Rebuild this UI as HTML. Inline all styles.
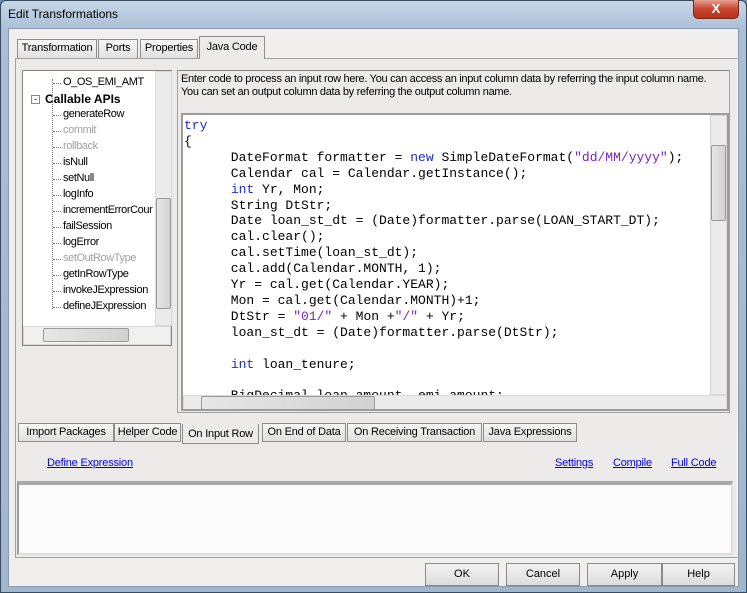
<!DOCTYPE html>
<html><head><style>
*{margin:0;padding:0;box-sizing:border-box}
body{width:747px;height:593px;overflow:hidden;background:#6f8cab;font-family:"Liberation Sans",sans-serif;font-size:11px;color:#000;position:relative}
.a{position:absolute}
.win{left:0;top:0;width:747px;height:593px;background:linear-gradient(#c6d6e6,#a9bfd6 30px,#9fb6cf);border:1px solid #3a4a5e;border-radius:6px 6px 0 0}
.client{left:8px;top:28px;width:731px;height:559px;background:#f0efed;border:1px solid #8a99ab}
.tab{position:absolute;top:39px;height:19px;background:linear-gradient(#f6f6f6,#e2e2e2);border:1px solid #8d8d8d;border-bottom:none;font-size:11px;line-height:17px;text-align:center;letter-spacing:-0.2px}
.panel{left:15px;top:58px;width:723px;height:500px;border:1px solid #a0a0a0;border-right-color:#fff;border-bottom-color:#a0a0a0;background:#ecebe9}
.tree{left:22px;top:70px;width:150px;height:276px;border:1px solid #828282;background:#fff}
.ti{position:absolute;left:40px;font-size:11px;white-space:nowrap;letter-spacing:-0.4px}
.ti:before{content:"";position:absolute;left:-10px;top:7px;width:8px;border-top:1px dotted #777}
.g{color:#a0a0a0}
.code{left:181px;top:113px;width:548px;height:298px;border:2px solid #9c9c9c;background:#fff;overflow:hidden}
pre{font-family:"Liberation Mono",monospace;font-size:13px;line-height:15.9px;position:absolute;left:1px;top:3px;color:#000}
.k{color:#1e2dc8}.s{color:#7a23b9}
.sb{background:#ebebeb;border:1px solid #d8d8d8}
.thumb{background:linear-gradient(90deg,#e6e6e6,#d2d2d2);border:1px solid #9a9a9a;border-radius:2px}
.bt{position:absolute;top:423px;height:19px;background:linear-gradient(#f6f6f6,#e0e0e0);border:1px solid #8d8d8d;font-size:11px;line-height:17px;text-align:center;letter-spacing:-0.2px}
.lnk{color:#0000e0;text-decoration:underline;font-size:11px;position:absolute;top:457px;letter-spacing:-0.2px}
.btn{position:absolute;top:563px;height:23px;border:1px solid #8a8a8a;background:linear-gradient(#f2f2f2,#dcdcdc);font-size:11px;line-height:21px;text-align:center}
</style></head><body>
<div class="a win"></div>
<div class="a" style="left:8px;top:7px;font-size:12px">Edit Transformations</div>
<div class="a" style="left:693px;top:0;width:46px;height:19px;background:linear-gradient(#e8a090,#c9452e 50%,#b8301a);border:1px solid #6b2a20;border-top:none;border-radius:0 0 5px 5px;color:#fff;font-weight:bold;font-size:13px;text-align:center;line-height:17px">X</div>
<div class="a client"></div>
<div class="a panel"></div>
<div class="tab" style="left:17px;width:80px">Transformation</div>
<div class="tab" style="left:98px;width:40px">Ports</div>
<div class="tab" style="left:140px;width:58px">Properties</div>
<div class="tab" style="left:199px;top:36px;height:23px;width:66px;background:#ecebe9;z-index:3;line-height:20px">Java Code</div>

<div class="a tree">
 <div class="ti" style="left:40px;top:5px">O_OS_EMI_AMT</div>
 <div class="a" style="left:8px;top:24px;width:9px;height:9px;border:1px solid #888;font-size:9px;line-height:6px;text-align:center">-</div>
 <div class="a" style="left:22px;top:21px;font-weight:bold;font-size:12px">Callable APIs</div>
 <div class="ti" style="top:37px">generateRow</div>
 <div class="ti g" style="top:53px">commit</div>
 <div class="ti g" style="top:69px">rollback</div>
 <div class="ti" style="top:85px">isNull</div>
 <div class="ti" style="top:101px">setNull</div>
 <div class="ti" style="top:117px">logInfo</div>
 <div class="ti" style="top:133px">incrementErrorCour</div>
 <div class="ti" style="top:149px">failSession</div>
 <div class="ti" style="top:165px">logError</div>
 <div class="ti g" style="top:181px">setOutRowType</div>
 <div class="ti" style="top:197px">getInRowType</div>
 <div class="ti" style="top:213px">invokeJExpression</div>
 <div class="ti" style="top:229px">defineJExpression</div>
 <div class="a" style="left:29px;top:8px;height:230px;border-left:1px dotted #777"></div>
 <div class="a sb" style="left:132px;top:0;width:17px;height:255px"></div>
 <div class="a thumb" style="left:133px;top:127px;width:15px;height:111px"></div>
 <div class="a sb" style="left:0;top:255px;width:148px;height:19px;background:#f0f0f0"></div>
 <div class="a thumb" style="left:20px;top:257px;width:86px;height:14px"></div>
</div>

<div class="a" style="left:177px;top:70px;width:553px;height:343px;border:1px solid #a0a0a0;border-top-color:#888"></div>
<div class="a" style="left:181px;top:73px;font-size:11px;line-height:13px;letter-spacing:-0.3px">Enter code to process an input row here. You can access an input column data by referring the input column name.<br>You can set an output column data by referring the output column name.</div>

<div class="a code">
<pre><span class="k">try</span>
{
      DateFormat formatter = <span class="k">new</span> SimpleDateFormat(<span class="s">"dd/MM/yyyy"</span>);
      Calendar cal = Calendar.getInstance();
      <span class="k">int</span> Yr, Mon;
      String DtStr;
      Date loan_st_dt = (Date)formatter.parse(LOAN_START_DT);
      cal.clear();
      cal.setTime(loan_st_dt);
      cal.add(Calendar.MONTH, 1);
      Yr = cal.get(Calendar.YEAR);
      Mon = cal.get(Calendar.MONTH)+1;
      DtStr = <span class="s">"01/"</span> + Mon +<span class="s">"/"</span> + Yr;
      loan_st_dt = (Date)formatter.parse(DtStr);

      <span class="k">int</span> loan_tenure;

      BigDecimal loan_amount, emi_amount;</pre>
 <div class="a sb" style="left:527px;top:0;width:17px;height:280px"></div>
 <div class="a thumb" style="left:528px;top:30px;width:15px;height:76px"></div>
 <div class="a sb" style="left:0;top:280px;width:544px;height:16px"></div>
 <div class="a thumb" style="left:18px;top:281px;width:174px;height:14px"></div>
</div>

<div class="bt" style="left:18px;width:96px">Import Packages</div>
<div class="bt" style="left:114px;width:67px">Helper Code</div>
<div class="bt" style="left:182px;width:77px;top:424px;height:20px;background:#ecebe9;border-top:none;line-height:21px">On Input Row</div>
<div class="bt" style="left:262px;width:84px">On End of Data</div>
<div class="bt" style="left:347px;width:135px">On Receiving Transaction</div>
<div class="bt" style="left:483px;width:94px">Java Expressions</div>

<span class="lnk" style="left:47px">Define Expression</span>
<span class="lnk" style="left:555px">Settings</span>
<span class="lnk" style="left:613px">Compile</span>
<span class="lnk" style="left:671px">Full Code</span>

<div class="a" style="left:17px;top:481px;width:716px;height:74px;border:2px solid #9c9c9c;border-top:4px solid #a8a8a8;border-right-color:#ddd;border-bottom-color:#ddd;background:#fbfbfb"></div>

<div class="btn" style="left:425px;width:74px">OK</div>
<div class="btn" style="left:506px;width:74px">Cancel</div>
<div class="btn" style="left:587px;width:75px">Apply</div>
<div class="btn" style="left:662px;width:73px">Help</div>
</body></html>
